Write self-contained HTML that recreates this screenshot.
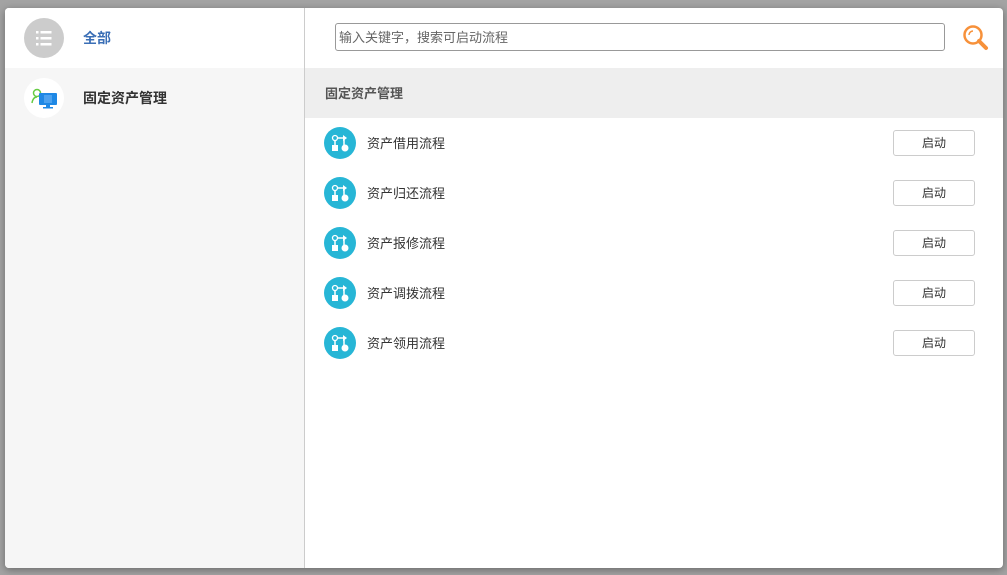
<!DOCTYPE html><html><head><meta charset="utf-8"><style>
body{margin:0;width:1007px;height:575px;background:#a3a3a3;font-family:"Liberation Sans","Noto Sans CJK SC",sans-serif;position:relative;overflow:hidden}
.dlg{position:absolute;left:5px;top:8px;width:998px;height:560px;background:#fff;border-radius:4px;box-shadow:0 2px 8px rgba(0,0,0,.35);overflow:hidden}
.left{position:absolute;left:0;top:0;width:299px;height:560px;background:#f6f6f6;border-right:1px solid #ccc}
.row{position:absolute;left:0;width:299px;height:60px}
.circ{position:absolute;left:19px;top:10px;width:40px;height:40px;border-radius:50%}
.lbl{position:absolute;left:78px;top:0;line-height:60px;font-size:14px;font-weight:bold}
.search{position:absolute;left:330px;top:15px;width:610px;height:28px;border:1px solid #999;border-radius:3px;font-size:13px;color:#666;line-height:28px;padding-left:3px;box-sizing:border-box}
.sec{position:absolute;left:300px;top:60px;width:698px;height:50px;background:#eee;font-size:13px;font-weight:bold;color:#555;line-height:52px;padding-left:20px;box-sizing:border-box}
.item{position:absolute;left:300px;width:698px;height:50px}
.ic{position:absolute;left:19px;top:9px;width:32px;height:32px;border-radius:50%;background:#27b6d6}
.it{position:absolute;left:62px;top:1px;line-height:50px;font-size:13px;color:#333}
.btn{position:absolute;left:588px;top:12px;width:80px;height:24px;border:1px solid #ccc;border-radius:3px;font-size:12px;color:#333;text-align:center;line-height:25px}
</style></head><body><div class="dlg">
<div class="left">
<div class="row" style="top:0;background:#fff"><div class="circ" style="background:#ccc"><svg width="40" height="40"><g fill="#fff"><rect x="12" y="13" width="2.5" height="2.5"/><rect x="12" y="19" width="2.5" height="2.5"/><rect x="12" y="25" width="2.5" height="2.5"/><rect x="16.5" y="13" width="11" height="2.5"/><rect x="16.5" y="19" width="11" height="2.5"/><rect x="16.5" y="25" width="11" height="2.5"/></g></svg></div><div class="lbl" style="color:#3b6fb6">全部</div></div>
<div class="row" style="top:60px"><div class="circ" style="background:#fff"><svg width="40" height="40"><circle cx="13" cy="15" r="3.5" fill="none" stroke="#6c4" stroke-width="1.5"/><path d="M8 25 Q9 19 13 19" fill="none" stroke="#6c4" stroke-width="1.5"/><rect x="15" y="15" width="18" height="12" rx="1" fill="#1e88e5"/><rect x="22" y="27" width="4" height="2" fill="#1e88e5"/><rect x="19" y="29" width="10" height="1.5" fill="#1e88e5"/><g stroke="#9cf" stroke-width=".8"><path d="M20 18h8M20 20h8M20 22h8M20 24h8"/></g></svg></div><div class="lbl" style="color:#333">固定资产管理</div></div>
</div>
<div class="search">输入关键字，搜索可启动流程</div>
<svg style="position:absolute;left:957px;top:16px" width="28" height="28"><circle cx="11" cy="11" r="8.5" fill="none" stroke="#f7913a" stroke-width="2.5"/><path d="M7 11a4 4 0 0 1 4-4" fill="none" stroke="#f7913a" stroke-width="1.5"/><path d="M17 17l7 7" stroke="#f7913a" stroke-width="4" stroke-linecap="round"/></svg>
<div class="sec">固定资产管理</div>
<div class="item" style="top:110px"><div class="ic"><svg width="32" height="32"><g fill="#fff"><circle cx="11" cy="11" r="2.5" fill="none" stroke="#fff" stroke-width="1.3"/><rect x="8" y="18" width="6" height="6"/><circle cx="21" cy="21" r="3.5"/><path d="M11 14v4M14 11h6v7" stroke="#fff" stroke-width="1.5" fill="none"/><path d="M19 8l4 3-4 3z"/></g></svg></div><div class="it">资产借用流程</div><div class="btn">启动</div></div>
<div class="item" style="top:160px"><div class="ic"><svg width="32" height="32"><g fill="#fff"><circle cx="11" cy="11" r="2.5" fill="none" stroke="#fff" stroke-width="1.3"/><rect x="8" y="18" width="6" height="6"/><circle cx="21" cy="21" r="3.5"/><path d="M11 14v4M14 11h6v7" stroke="#fff" stroke-width="1.5" fill="none"/><path d="M19 8l4 3-4 3z"/></g></svg></div><div class="it">资产归还流程</div><div class="btn">启动</div></div>
<div class="item" style="top:210px"><div class="ic"><svg width="32" height="32"><g fill="#fff"><circle cx="11" cy="11" r="2.5" fill="none" stroke="#fff" stroke-width="1.3"/><rect x="8" y="18" width="6" height="6"/><circle cx="21" cy="21" r="3.5"/><path d="M11 14v4M14 11h6v7" stroke="#fff" stroke-width="1.5" fill="none"/><path d="M19 8l4 3-4 3z"/></g></svg></div><div class="it">资产报修流程</div><div class="btn">启动</div></div>
<div class="item" style="top:260px"><div class="ic"><svg width="32" height="32"><g fill="#fff"><circle cx="11" cy="11" r="2.5" fill="none" stroke="#fff" stroke-width="1.3"/><rect x="8" y="18" width="6" height="6"/><circle cx="21" cy="21" r="3.5"/><path d="M11 14v4M14 11h6v7" stroke="#fff" stroke-width="1.5" fill="none"/><path d="M19 8l4 3-4 3z"/></g></svg></div><div class="it">资产调拨流程</div><div class="btn">启动</div></div>
<div class="item" style="top:310px"><div class="ic"><svg width="32" height="32"><g fill="#fff"><circle cx="11" cy="11" r="2.5" fill="none" stroke="#fff" stroke-width="1.3"/><rect x="8" y="18" width="6" height="6"/><circle cx="21" cy="21" r="3.5"/><path d="M11 14v4M14 11h6v7" stroke="#fff" stroke-width="1.5" fill="none"/><path d="M19 8l4 3-4 3z"/></g></svg></div><div class="it">资产领用流程</div><div class="btn">启动</div></div>
</div>
</body></html>
